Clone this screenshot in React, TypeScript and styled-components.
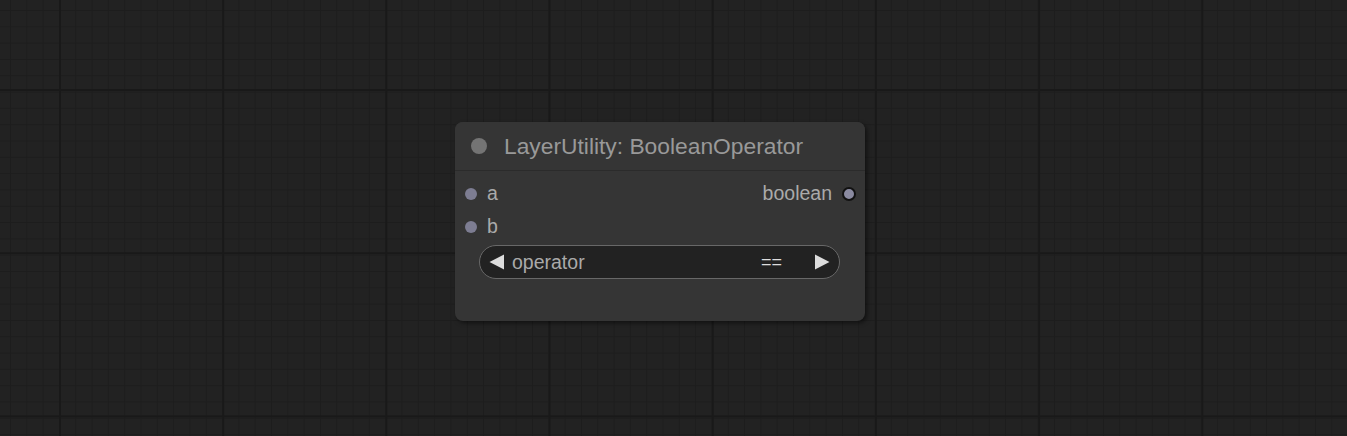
import styled, { createGlobalStyle } from "styled-components";

const GlobalStyle = createGlobalStyle`
	html, body {
		margin: 0;
		padding: 0;
		background: #222222;
		font-family: "Liberation Sans", Arial, sans-serif;
	}
`;

type SlotType = {
	name: string;
};

const inputs: SlotType[] = [{ name: "a" }, { name: "b" }];
const outputs: SlotType[] = [{ name: "boolean" }];

export default function App() {
	return (
		<Canvas>
			<GlobalStyle />
			<Node>
				<Title>
					<TitleDot />
					<TitleText>LayerUtility: BooleanOperator</TitleText>
				</Title>
				<Body>
					<Slots>
						<Column>
							{inputs.map((slot) => (
								<SlotRow key={slot.name}>
									<InputDot />
									<SlotLabel>{slot.name}</SlotLabel>
								</SlotRow>
							))}
						</Column>
						<Column $right>
							{outputs.map((slot) => (
								<SlotRow key={slot.name}>
									<SlotLabel>{slot.name}</SlotLabel>
									<OutputDot />
								</SlotRow>
							))}
						</Column>
					</Slots>
					<Combo>
						<Arrow viewBox="0 0 16 16">
							<polygon points="15,0.5 15,15.5 0.5,8" />
						</Arrow>
						<ComboLabel>operator</ComboLabel>
						<ComboValue>==</ComboValue>
						<Arrow viewBox="0 0 16 16">
							<polygon points="1,0.5 1,15.5 15.5,8" />
						</Arrow>
					</Combo>
				</Body>
			</Node>
		</Canvas>
	);
}

const Canvas = styled.div`
	position: relative;
	width: 1347px;
	height: 436px;
	overflow: hidden;
	background-color: #222222;
	background-image:
		linear-gradient(to right, #191919 0, #191919 2px, transparent 2px),
		linear-gradient(to bottom, #191919 0, #191919 2px, transparent 2px),
		linear-gradient(to right, #1d1d1d 0, #1d1d1d 1px, transparent 1px),
		linear-gradient(to bottom, #1d1d1d 0, #1d1d1d 1px, transparent 1px);
	background-size:
		163.2px 163.2px,
		163.2px 163.2px,
		16.32px 16.32px,
		16.32px 16.32px;
	background-position:
		59px 0,
		0 89px,
		10px 0,
		0 10px;
`;

const Node = styled.div`
	position: absolute;
	left: 455px;
	top: 122px;
	width: 410px;
	height: 199px;
	display: flex;
	flex-direction: column;
	background: #353535;
	border-radius: 8px;
	box-shadow: 2px 2px 4px rgba(0, 0, 0, 0.5);
`;

const Title = styled.div`
	height: 48px;
	display: flex;
	align-items: center;
	padding-left: 16px;
	gap: 17px;
	border-bottom: 1px solid #2b2b2b;
	border-radius: 8px 8px 0 0;
	background: #353535;
`;

const TitleDot = styled.span`
	flex-shrink: 0;
	width: 16px;
	height: 16px;
	border-radius: 50%;
	background: #747474;
`;

const TitleText = styled.span`
	color: #999999;
	font-size: 22.8px;
	line-height: 1;
	margin-top: 1px;
`;

const Body = styled.div`
	display: flex;
	flex-direction: column;
	padding: 6px 9px 0 10px;
`;

const Slots = styled.div`
	display: flex;
	justify-content: space-between;
`;

const Column = styled.div<{ $right?: boolean }>`
	display: flex;
	flex-direction: column;
	align-items: ${(p) => (p.$right ? "flex-end" : "flex-start")};
`;

const SlotRow = styled.div`
	height: 33px;
	display: flex;
	align-items: center;
	gap: 10px;
`;

const InputDot = styled.span`
	flex-shrink: 0;
	width: 12px;
	height: 12px;
	border-radius: 50%;
	background: #7d7d92;
`;

const OutputDot = styled.span`
	flex-shrink: 0;
	box-sizing: border-box;
	width: 14px;
	height: 14px;
	border-radius: 50%;
	background: #8a8aa0;
	border: 2px solid #111111;
`;

const SlotLabel = styled.span`
	color: #aaaaaa;
	font-size: 19.5px;
	line-height: 1;
`;

const Combo = styled.div`
	margin: 2px 16px 0 14px;
	height: 34px;
	box-sizing: border-box;
	display: flex;
	align-items: center;
	padding: 0 9px 0 9px;
	background: #222222;
	border: 1px solid #686868;
	border-radius: 17px;
`;

const Arrow = styled.svg`
	width: 16px;
	height: 16px;
	fill: #dddddd;
	flex-shrink: 0;
`;

const ComboLabel = styled.span`
	margin-left: 7px;
	color: #aaaaaa;
	font-size: 19.5px;
	flex: 1;
`;

const ComboValue = styled.span`
	color: #dddddd;
	font-size: 18px;
	margin-right: 32px;
`;
